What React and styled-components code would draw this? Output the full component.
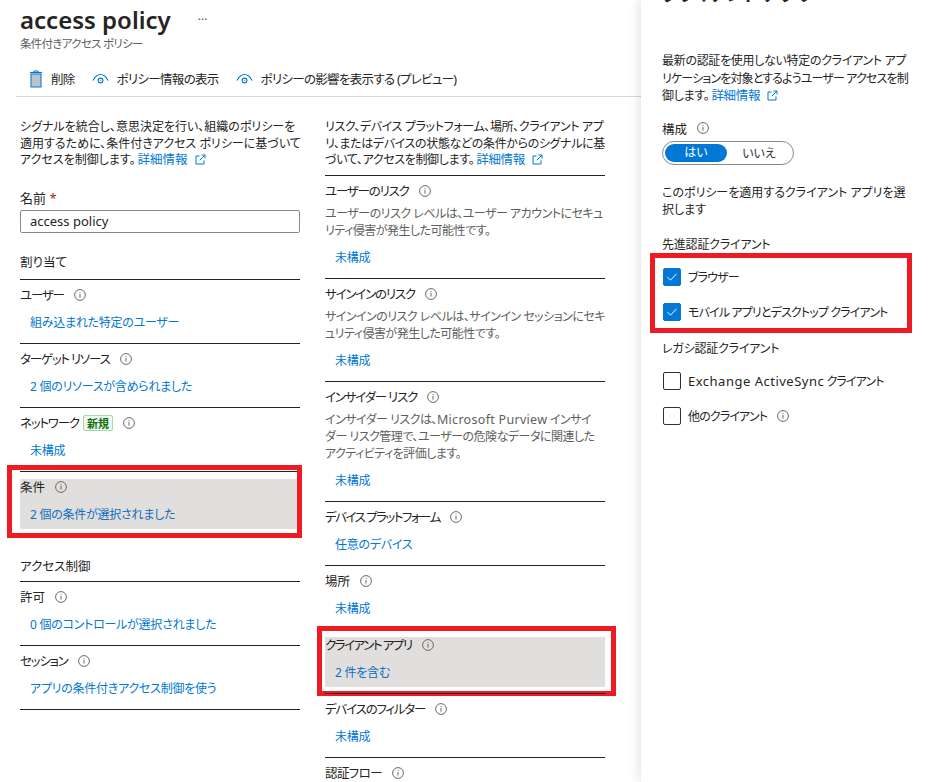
import React from 'react';
import styled, { createGlobalStyle } from 'styled-components';

const GlobalStyle = createGlobalStyle`
  html, body { margin: 0; padding: 0; height: 100%; overflow: hidden; background: #fff; }
  body {
    font-family: "Noto Sans", "Noto Sans CJK JP", sans-serif;
    font-size: 12px;
    color: #252423;
    font-feature-settings: "palt";
  }
`;

const InfoIcon = () => (
  <InfoSvg viewBox="0 0 12 12">
    <circle cx="6" cy="6" r="5.4" fill="none" stroke="#6b6a69" strokeWidth="1" />
    <rect x="5.5" y="5" width="1" height="3.6" fill="#6b6a69" />
    <rect x="5.5" y="3.2" width="1" height="1" fill="#6b6a69" />
  </InfoSvg>
);

const ExternalIcon = () => (
  <ExternalSvg viewBox="0 0 11 11">
    <path d="M4.5 2H1v8h8V6.5" fill="none" stroke="#0078d4" strokeWidth="1" />
    <path d="M6.5 1H10v3.5M10 1 4.8 6.2" fill="none" stroke="#0078d4" strokeWidth="1" />
  </ExternalSvg>
);

const TrashIcon = () => (
  <svg width="14" height="18" viewBox="0 0 14 18">
    <rect x="2" y="4" width="10" height="13" fill="#b9c3cc" stroke="#0078d4" strokeWidth="1" />
    <path d="M1 2.5h12" stroke="#0078d4" strokeWidth="1.2" />
    <path d="M5 2.5V1h4v1.5" fill="none" stroke="#0078d4" strokeWidth="1" />
  </svg>
);

const ViewIcon = () => (
  <svg width="17" height="12" viewBox="0 0 17 12">
    <path d="M1 7.5C3 3.5 5.5 1.5 8.5 1.5s5.5 2 7.5 6" fill="none" stroke="#0078d4" strokeWidth="1.1" />
    <circle cx="8.5" cy="7.5" r="2.4" fill="none" stroke="#0078d4" strokeWidth="1.1" />
    <circle cx="8.5" cy="7.5" r=".8" fill="#50a0dc" />
  </svg>
);

const CheckMark = () => (
  <svg width="12" height="10" viewBox="0 0 12 10">
    <path d="M1.5 5.2 4.5 8.2 10.5 1.8" fill="none" stroke="#fff" strokeWidth="1" />
  </svg>
);

// katakana labels are much narrower in the reference, so they get squeezed
function Item({ label, squeeze = 1.2, badge, desc, link, selected, frame }) {
  return (
    <ItemBox>
      <ItemBody $selected={selected}>
        <Label>
          <LabelText $squeeze={squeeze}>{label}</LabelText>
          {badge && <Badge>{badge}</Badge>}
          <InfoIcon />
        </Label>
        {desc && <ItemDesc>{desc}</ItemDesc>}
        {link && <ValueLink $dark={selected}>{link}</ValueLink>}
      </ItemBody>
      {frame && <RedFrame $frame={frame} />}
    </ItemBox>
  );
}

function Check({ checked, children }) {
  return (
    <CheckRow>
      <CheckBox $checked={checked}>{checked && <CheckMark />}</CheckBox>
      {children}
    </CheckRow>
  );
}

const leftFrame = { top: -7, left: -13, right: -2, height: 73 };
const clientFrame = { top: -4, left: -8, right: -11, height: 70 };

export default function App() {
  return (
    <Page>
      <GlobalStyle />
      <Main>
        <Header>
          <TitleRow>
            <Title>access policy</Title>
            <More>···</More>
          </TitleRow>
          <Subtitle>条件付きアクセス ポリシー</Subtitle>
        </Header>
        <Toolbar>
          <ToolButton><TrashIcon />削除</ToolButton>
          <ToolButton><ViewIcon />ポリシー情報の表示</ToolButton>
          <ToolButton><ViewIcon />ポリシーの影響を表示する (プレビュー)</ToolButton>
        </Toolbar>
        <Columns>
          <Column>
            <Intro>
              シグナルを統合し、意思決定を行い、組織のポリシーを<br />
              適用するために、条件付きアクセス ポリシーに基づいて<br />
              アクセスを制御します。<MoreLink>詳細情報</MoreLink><ExternalIcon />
            </Intro>
            <FieldLabel>名前 <Required>*</Required></FieldLabel>
            <NameInput readOnly value="access policy" />
            <GroupTitle>割り当て</GroupTitle>
            <Item label="ユーザー" link="組み込まれた特定のユーザー" />
            <Item label="ターゲット リソース" link="2 個のリソースが含められました" />
            <Item label="ネットワーク" badge="新規" link="未構成" />
            <Item label="条件" squeeze={0} link="2 個の条件が選択されました" selected frame={leftFrame} />
            <GroupTitle $second>アクセス制御</GroupTitle>
            <Item label="許可" squeeze={0} link="0 個のコントロールが選択されました" />
            <Item label="セッション" link="アプリの条件付きアクセス制御を使う" />
            <EndRule />
          </Column>
          <Column>
            <Intro $short>
              リスク、デバイス プラットフォーム、場所、クライアント アプ<br />
              リ、またはデバイスの状態などの条件からのシグナルに基<br />
              づいて、アクセスを制御します。<MoreLink>詳細情報</MoreLink><ExternalIcon />
            </Intro>
            <Item
              label="ユーザーのリスク"
              desc={<>ユーザーのリスク レベルは、ユーザー アカウントにセキュ<br />リティ侵害が発生した可能性です。</>}
              link="未構成"
            />
            <Item
              label="サインインのリスク"
              desc={<>サインインのリスク レベルは、サインイン セッションにセキ<br />ュリティ侵害が発生した可能性です。</>}
              link="未構成"
            />
            <Item
              label="インサイダー リスク"
              desc={<>インサイダー リスクは、<Latin>Microsoft Purview</Latin> インサイ<br />ダー リスク管理で、ユーザーの危険なデータに関連した<br />アクティビティを評価します。</>}
              link="未構成"
            />
            <Item label="デバイス プラットフォーム" squeeze={1.5} link="任意のデバイス" />
            <Item label="場所" squeeze={0} link="未構成" />
            <Item label="クライアント アプリ" squeeze={1.5} link="2 件を含む" selected frame={clientFrame} />
            <Item label="デバイスのフィルター" link="未構成" />
            <Item label="認証フロー" squeeze={0.6} />
          </Column>
        </Columns>
      </Main>
      <Panel>
        <PanelTitle>クライアント アプリ</PanelTitle>
        <PanelText>
          最新の認証を使用しない特定のクライアント アプ<br />
          <TightLine>リケーションを対象とするようユーザー アクセスを制</TightLine><br />
          御します。<MoreLink>詳細情報</MoreLink><ExternalIcon />
        </PanelText>
        <ConfigLabel>構成<InfoIcon /></ConfigLabel>
        <Toggle>
          <ToggleOn>はい</ToggleOn>
          <ToggleOff>いいえ</ToggleOff>
        </Toggle>
        <PanelPrompt>
          このポリシーを適用するクライアント アプリを選<br />
          択します
        </PanelPrompt>
        <CheckHeading>先進認証クライアント</CheckHeading>
        <CheckGroup>
          <Check checked>ブラウザー</Check>
          <Check checked>モバイル アプリとデスクトップ クライアント</Check>
          <PanelFrame />
        </CheckGroup>
        <CheckHeading $legacy>レガシ認証クライアント</CheckHeading>
        <CheckGroup $legacy>
          <Check><ExchangeText>Exchange ActiveSync</ExchangeText> クライアント</Check>
          <Check>他のクライアント<InfoIcon /></Check>
        </CheckGroup>
      </Panel>
    </Page>
  );
}

const Page = styled.div`
  display: flex;
  width: 929px;
  height: 782px;
  overflow: hidden;
`;

const Main = styled.div`
  flex: 0 0 641px;
  padding-left: 20px;
  box-sizing: border-box;
`;

const Header = styled.div`
  height: 57px;
  padding-top: 3px;
  box-sizing: border-box;
`;

const TitleRow = styled.div`
  display: flex;
  align-items: center;
  height: 33px;
`;

const Title = styled.h1`
  margin: 0;
  font-size: 24px;
  line-height: 32px;
  font-weight: 600;
  color: #252423;
`;

const More = styled.span`
  margin-left: 27px;
  font-size: 12px;
  color: #605e5c;
`;

const Subtitle = styled.div`
  font-size: 11.5px;
  line-height: 16px;
  letter-spacing: -0.7px;
  color: #605e5c;
`;

const Toolbar = styled.div`
  display: flex;
  align-items: center;
  gap: 17px;
  height: 40px;
  margin-left: -4px;
  padding-left: 13px;
  padding-top: 4px;
  box-sizing: border-box;
  border-bottom: 1px solid #d8d8d8;
`;

const ToolButton = styled.div`
  display: flex;
  align-items: center;
  gap: 8px;
  font-size: 12.5px;
  letter-spacing: -0.7px;
  white-space: nowrap;
`;

const Columns = styled.div`
  display: flex;
  gap: 25px;
  padding-top: 22px;
`;

const Column = styled.div`
  flex: 0 0 280px;
  width: 280px;
`;

const Intro = styled.p`
  margin: 0 0 ${(props) => (props.$short ? '6px' : '21px')};
  line-height: 16.5px;
  letter-spacing: ${(props) => (props.$short ? '-0.35px' : '0')};
  white-space: nowrap;
`;

const MoreLink = styled.span`
  color: #0078d4;
  font-size: 12.5px;
  margin-left: 2px;
`;

const ExternalSvg = styled.svg`
  width: 11px;
  height: 11px;
  margin-left: 7px;
  vertical-align: -1px;
`;

const InfoSvg = styled.svg`
  flex: none;
  width: 12px;
  height: 12px;
  margin-left: 10px;
`;

const Latin = styled.span`
  font-size: 12.5px;
  letter-spacing: 0.3px;
`;

const FieldLabel = styled.div`
  font-size: 13px;
  line-height: 17px;
  margin-bottom: 3px;
`;

const Required = styled.span`
  color: #a4262c;
`;

const NameInput = styled.input`
  display: block;
  width: 280px;
  height: 23px;
  box-sizing: border-box;
  padding: 0 9px;
  border: 1px solid #8a8886;
  border-radius: 2px;
  font-family: inherit;
  font-size: 13px;
  color: #252423;
  outline: none;
`;

const GroupTitle = styled.div`
  margin-top: ${(props) => (props.$second ? '23px' : '21px')};
  margin-bottom: ${(props) => (props.$second ? '6px' : '8px')};
  line-height: 17px;
  font-size: 12.5px;
`;

const ItemBox = styled.div`
  position: relative;
  padding: 7px 0 6px;
  border-top: 1px solid #252423;
`;

const ItemBody = styled.div`
  padding-bottom: 6px;
  background: ${(props) => (props.$selected ? '#e0dfdd' : 'transparent')};
`;

const Label = styled.div`
  display: flex;
  align-items: center;
  height: 17px;
  line-height: 17px;
  white-space: nowrap;
`;

const LabelText = styled.span`
  font-size: 12.5px;
  letter-spacing: ${(props) => -props.$squeeze}px;
`;

const Badge = styled.span`
  margin-left: 4px;
  padding: 0 3px;
  height: 16px;
  line-height: 15px;
  box-sizing: border-box;
  border: 1px solid #a3d9a5;
  border-radius: 2px;
  background: #eff8ef;
  color: #0e700e;
  font-size: 11px;
  font-weight: 600;
`;

const ItemDesc = styled.div`
  margin-top: 5px;
  margin-bottom: 1.5px;
  line-height: 17px;
  letter-spacing: -0.5px;
  color: #605e5c;
  white-space: nowrap;
`;

const ValueLink = styled.div`
  margin-top: 10px;
  padding-left: 10px;
  line-height: 17px;
  height: 17px;
  letter-spacing: -0.25px;
  color: ${(props) => (props.$dark ? '#106ebe' : '#0078d4')};
  white-space: nowrap;
`;

const RedFrame = styled.div`
  position: absolute;
  top: ${(props) => props.$frame.top}px;
  left: ${(props) => props.$frame.left}px;
  right: ${(props) => props.$frame.right}px;
  height: ${(props) => props.$frame.height}px;
  box-sizing: border-box;
  border: 5px solid #ed1c24;
`;

const EndRule = styled.div`
  border-top: 1px solid #252423;
`;

const Panel = styled.aside`
  flex: 1;
  min-width: 0;
  padding-left: 21px;
  background: #fff;
  box-shadow: -3px 0 10px rgba(0, 0, 0, 0.1);
  position: relative;
`;

const PanelTitle = styled.h2`
  margin: -18px 0 0;
  height: 24px;
  line-height: 24px;
  font-size: 18px;
  font-weight: 600;
  white-space: nowrap;
`;

const PanelText = styled.p`
  margin: 46px 0 0;
  line-height: 17.5px;
  letter-spacing: -0.3px;
  white-space: nowrap;
`;

const TightLine = styled.span`
  letter-spacing: -0.85px;
`;

const ConfigLabel = styled.div`
  display: flex;
  align-items: center;
  height: 17px;
  margin-top: 15px;
  font-size: 12.5px;
`;

const Toggle = styled.div`
  display: flex;
  align-items: center;
  width: 132px;
  height: 24px;
  box-sizing: border-box;
  margin-top: 4px;
  padding: 0 2px;
  border: 1px solid #8a8886;
  border-radius: 12px;
`;

const ToggleOn = styled.div`
  width: 62px;
  height: 18px;
  line-height: 18px;
  border-radius: 9px;
  text-align: center;
  background: #0078d4;
  color: #fff;
`;

const ToggleOff = styled.div`
  flex: 1;
  text-align: center;
  color: #323130;
`;

const PanelPrompt = styled.p`
  margin: 19px 0 0;
  line-height: 17.5px;
  white-space: nowrap;
`;

const CheckHeading = styled.div`
  margin-top: ${(props) => (props.$legacy ? '8px' : '17px')};
  line-height: 17px;
  letter-spacing: -0.2px;
`;

const CheckGroup = styled.div`
  position: relative;
  display: flex;
  flex-direction: column;
  gap: 17px;
  margin-top: 15px;
  padding-bottom: ${(props) => (props.$legacy ? '0' : '11px')};
`;

const CheckRow = styled.div`
  display: flex;
  align-items: center;
  height: 18px;
  margin-left: 1px;
  white-space: pre;
  letter-spacing: -0.85px;
`;

const ExchangeText = styled.span`
  font-size: 13px;
  letter-spacing: 0.5px;
`;

const CheckBox = styled.div`
  flex: none;
  display: flex;
  align-items: center;
  justify-content: center;
  width: 18px;
  height: 18px;
  margin-right: 7px;
  box-sizing: border-box;
  border-radius: 2px;
  border: 1px solid ${(props) => (props.$checked ? '#0078d4' : '#323130')};
  background: ${(props) => (props.$checked ? '#0078d4' : '#fff')};
`;

const PanelFrame = styled.div`
  position: absolute;
  top: -15px;
  left: -12px;
  width: 262px;
  height: 80px;
  box-sizing: border-box;
  border: 5px solid #ed1c24;
`;
